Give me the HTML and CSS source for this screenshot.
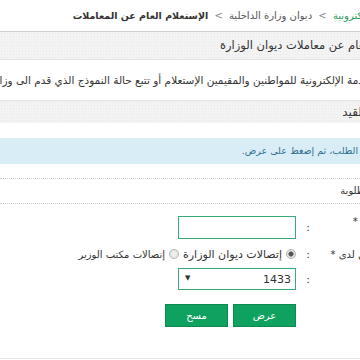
FILE: index.html
```html
<!DOCTYPE html>
<html lang="ar">

<head>
    <meta charset="utf-8">
    <meta name="viewport" content="width=device-width, initial-scale=1.0">
    <title>الإستعلام العام عن المعاملات</title>
    <link rel="stylesheet" href="styles.css">
</head>

<body>
    <div class="page">
        <!-- مسار الصفحة -->
        <div class="breadcrumb">
            <a href="#" class="crumb-link">الخدمات الإلكترونية</a>
            <span class="sep">&gt;</span>
            <span class="crumb">ديوان وزارة الداخلية</span>
            <span class="sep">&gt;</span>
            <span class="crumb current">الإستعلام العام عن المعاملات</span>
        </div>

        <div class="panel">
            <h1 class="panel-title">الإستعلام العام عن معاملات ديوان الوزارة</h1>
            <p class="panel-desc">تتيح هذه الخدمة الإلكترونية للمواطنين والمقيمين الإستعلام أو تتبع حالة النموذج الذي قدم الى وزارة الداخلية</p>

            <h2 class="section-head">بيانات القيد</h2>

            <div class="alert-info">أدخل بيانات الطلب، ثم إضغط على عرض.</div>

            <div class="form-head">البيانات المطلوبة</div>

            <form class="form">
                <div class="row row-input">
                    <label class="label label-short">رقم المعاملة *</label>
                    <span class="colon">:</span>
                    <div class="field"><input type="text" class="input"></div>
                </div>

                <div class="row row-radio">
                    <label class="label">المعاملة مسجل لدى *</label>
                    <span class="colon">:</span>
                    <div class="field radios">
                        <label class="radio"><input type="radio" name="lada" checked> إتصالات ديوان الوزارة</label>
                        <label class="radio"><input type="radio" name="lada"> إتصالات مكتب الوزير</label>
                    </div>
                </div>

                <div class="row row-select">
                    <label class="label">السنة</label>
                    <span class="colon">:</span>
                    <div class="field">
                        <span class="select-wrap">
                            <select class="select">
                                <option>1433</option>
                                <option>1432</option>
                            </select>
                        </span>
                    </div>
                </div>

                <div class="buttons">
                    <button type="button" class="btn">عرض</button>
                    <button type="reset" class="btn">مسح</button>
                </div>
            </form>
        </div>
    </div>
</body>

</html>
```

FILE: styles.css
```css
body {
    margin: 0;
    overflow: hidden;
    background: #fff;
    font-family: "DejaVu Sans", sans-serif;
    color: #333;
}

.page {
    width: 450px;
    direction: rtl;
}

/* مسار الصفحة */
.breadcrumb {
    height: 31px;
    line-height: 31px;
    padding-right: 37px;
    border-bottom: 1px solid #cfcfcf;
    font-size: 10px;
    white-space: nowrap;
    color: #555;
}

.crumb-link {
    color: #1f9c5e;
    text-decoration: none;
}

.sep {
    color: #888;
    margin: 0 3px;
}

.current {
    font-weight: bold;
    font-size: 9.5px;
    color: #333;
}

.panel {
    border-bottom: 1px solid #e6e6e6;
    height: 326px;
}

.panel-title {
    margin: 0;
    height: 27px;
    line-height: 27px;
    padding-right: 33px;
    background-color: #f3f3f3;
    background-image: radial-gradient(#e9e9e9 0.6px, transparent 0.8px);
    background-size: 3px 3px;
    border-bottom: 1px solid #e2e2e2;
    font-size: 11.5px;
    font-weight: normal;
    white-space: nowrap;
    color: #333;
}

.panel-desc {
    margin: 0;
    height: 40px;
    line-height: 40px;
    padding-right: 34px;
    font-size: 10.5px;
    white-space: nowrap;
    color: #333;
}

.section-head {
    margin: 0;
    height: 22px;
    line-height: 22px;
    padding-right: 52px;
    background-color: #f3f3f3;
    background-image: radial-gradient(#e9e9e9 0.6px, transparent 0.8px);
    background-size: 3px 3px;
    border-top: 1px solid #e6e6e6;
    font-size: 12px;
    font-weight: normal;
    white-space: nowrap;
}

.alert-info {
    margin-top: 15px;
    height: 26px;
    line-height: 26px;
    padding-right: 43px;
    background: #d9edf7;
    color: #31708f;
    font-size: 9.5px;
    white-space: nowrap;
}

.form-head {
    margin-top: 14px;
    height: 24px;
    line-height: 24px;
    padding-right: 40px;
    border-top: 1px dotted #ccc;
    border-bottom: 1px dotted #ccc;
    font-size: 10px;
    white-space: nowrap;
}

.form {
    margin: 0;
    padding-top: 12px;
}

.row {
    display: grid;
    grid-template-columns: 130px 24px 1fr;
    align-items: center;
}

.row-input {
    height: 23px;
    margin-bottom: 4px;
}

.row-radio {
    height: 22px;
    margin-bottom: 3px;
}

.row-select {
    height: 22px;
}

.label {
    font-size: 10px;
    white-space: nowrap;
    padding-right: 27px;
    color: #333;
}

.label-short {
    padding-right: 36px;
    align-self: start;
}

.colon {
    font-size: 11px;
    text-align: center;
}

.input {
    box-sizing: border-box;
    width: 118px;
    height: 23px;
    border: 1px solid #3aa97a;
    margin: 0;
    display: block;
}

.radios {
    display: flex;
    gap: 4px;
    white-space: nowrap;
}

.radio {
    display: flex;
    align-items: center;
    gap: 4px;
    font-size: 11px;
    color: #333;
}

.radio + .radio {
    font-size: 10px;
}

.radio input {
    appearance: none;
    margin: 0;
    width: 10px;
    height: 10px;
    border-radius: 50%;
    border: 1px solid #b5b5b5;
    background: radial-gradient(circle, #f4f4f4 0, #dcdcdc 100%);
}

.radio input:checked {
    background: radial-gradient(circle, #555 0, #555 2px, #e6e6e6 3px, #d8d8d8 100%);
}

.select-wrap {
    position: relative;
    display: block;
    width: 118px;
}

.select-wrap::after {
    content: "\25BC";
    position: absolute;
    left: 7px;
    top: 6px;
    font-size: 7px;
    color: #333;
    pointer-events: none;
}

.select {
    appearance: none;
    box-sizing: border-box;
    width: 118px;
    height: 22px;
    border: 1px solid #3aa97a;
    border-radius: 0;
    background: #fff;
    padding: 0 4px;
    font-family: "DejaVu Sans", sans-serif;
    font-size: 11px;
    color: #333;
    display: block;
}

.buttons {
    display: flex;
    gap: 5px;
    padding-right: 154px;
    margin-top: 14px;
}

.btn {
    width: 63px;
    height: 23px;
    border: 1px solid #0c8a50;
    background: #0fa160;
    color: #fff;
    font-family: "DejaVu Sans", sans-serif;
    font-size: 10px;
    padding: 0;
}
```
